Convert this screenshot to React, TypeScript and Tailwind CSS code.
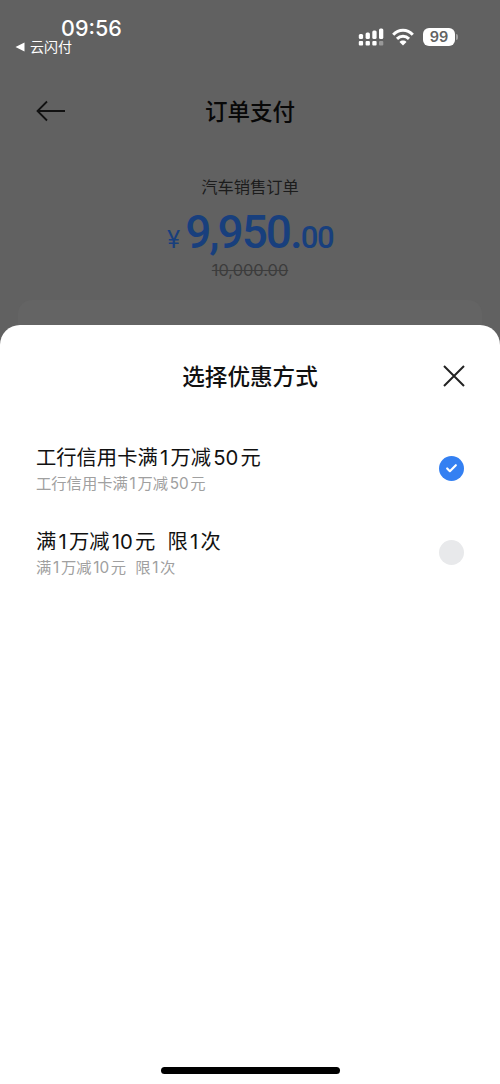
import { Check } from "lucide-react"

interface Coupon {
  id: number
  name: string
  selected: boolean
}

const coupons: Coupon[] = [
  { id: 1, name: "工行信用卡满1万减50元", selected: true },
  { id: 2, name: "满1万减10元 限1次", selected: false },
]

// Digits get a little air on both sides, between the Chinese characters
function MixedText({ text }: { text: string }) {
  return (
    <>
      {text.split(/(\d+| )/).map((part, i) => {
        if (part === " ") return <span key={i} className="inline-block w-[0.6em]" />
        if (/^\d+$/.test(part)) {
          return (
            <span key={i} className="mx-[0.11em]">
              {part}
            </span>
          )
        }
        return <span key={i}>{part}</span>
      })}
    </>
  )
}

function StatusBar() {
  return (
    <div className="flex h-[60px] justify-between text-white">
      <div className="pl-[15px] pt-[15px]">
        <div className="pl-[46px] text-[21.5px] font-medium leading-[26px]">09:56</div>
        <div className="flex h-[12px] items-center text-[14px] leading-[12px]">
          <svg width="10" height="10" viewBox="0 0 10 10" className="mr-[5px]">
            <path d="M0.5 5 L9.5 0.5 V9.5 Z" fill="currentColor" />
          </svg>
          云闪付
        </div>
      </div>
      <div className="mt-[28px] flex h-[18px] pr-[42px]">
        <svg width="26" height="18" viewBox="0 0 26 18" fill="currentColor">
          <rect x="0.8" y="6" width="4.3" height="5" rx="1.5" />
          <rect x="7.6" y="4.5" width="4.3" height="6.5" rx="1.5" />
          <rect x="14.3" y="2.5" width="4.3" height="8.5" rx="1.5" />
          <rect x="21" y="0.5" width="4.3" height="10.5" rx="1.5" />
          <rect x="0.8" y="13" width="4.3" height="4.5" rx="1" />
          <rect x="7.6" y="13" width="4.3" height="4.5" rx="1" />
          <rect x="14.3" y="13" width="4.3" height="4.5" rx="1" />
          <rect x="21" y="13" width="4.3" height="4.5" rx="1" opacity="0.35" />
        </svg>
        <svg width="22" height="18" viewBox="0 0 22 18" className="ml-[8px]" fill="none" stroke="currentColor" strokeWidth="3">
          <path d="M1.2 6.7 C6.8 0.8 15.2 0.8 20.8 6.7" />
          <path d="M5 10.9 C8.4 7.4 13.6 7.4 17 10.9" />
          <path d="M11 17.5 L7.5 13.9 C9.4 12.1 12.6 12.1 14.5 13.9 Z" fill="currentColor" stroke="none" />
        </svg>
        <div className="ml-[9px] flex h-[18px] w-[32px] items-center justify-center rounded-[6px] bg-white text-[14.5px] font-semibold text-[#626262]">
          99
        </div>
        <div className="ml-[1px] mt-[6px] h-[6px] w-[2px] rounded-r-full bg-[#a0a0a0]" />
      </div>
    </div>
  )
}

function OrderPage() {
  return (
    <div className="h-[325px] bg-[#616161]">
      <StatusBar />
      <header className="relative flex h-[102px] items-center justify-center">
        <svg width="30" height="24" viewBox="0 0 30 24" className="absolute left-[36px] top-[39px]" fill="none" stroke="#111" strokeWidth="1.8">
          <path d="M29 12 H1.5 M11 2.5 L1.5 12 L11 21.5" />
        </svg>
        <h1 className="pt-px text-[22.5px] font-medium text-[#080808]">订单支付</h1>
      </header>
      <div className="flex flex-col items-center">
        <div className="mt-[14px] text-[16.3px] leading-[22px] text-[#1c1c1c]">汽车销售订单</div>
        <div className="mt-[10px] flex h-[48px] items-baseline font-['Roboto'] leading-[48px] text-[#183f7d]">
          <span className="mr-[5px] font-['Inter'] text-[24px]">¥</span>
          <span className="text-[46px] font-medium tracking-[-2px]">9,950.</span>
          <span className="text-[31px] font-medium tracking-[-1.5px]">00</span>
        </div>
        <div className="mt-[4px] text-[16.4px] leading-[20px] text-[#3c3c3c] line-through">10,000.00</div>
      </div>
      <div className="mx-[18px] mt-[20px] h-[25px] rounded-t-[14px] bg-[#646464]" />
    </div>
  )
}

function CouponRow({ coupon }: { coupon: Coupon }) {
  return (
    <div className="flex h-[83.5px] items-center justify-between px-[36px]">
      <div className="pt-[3px]">
        <div className="text-[20.3px] leading-[28px] text-[#111]">
          <MixedText text={coupon.name} />
        </div>
        <div className="text-[15.3px] leading-[24px] text-[#a0a0a0]">
          <MixedText text={coupon.name} />
        </div>
      </div>
      {coupon.selected ? (
        <div className="flex size-[25px] items-center justify-center rounded-full bg-[#3480f2] text-white">
          <Check size={13} strokeWidth={4} />
        </div>
      ) : (
        <div className="size-[25px] rounded-full bg-[#e8e9eb]" />
      )}
    </div>
  )
}

export default function App() {
  return (
    <div className="h-[1084px] w-[500px] overflow-hidden bg-[#616161] font-['Inter','Noto_Sans_CJK_SC',sans-serif]">
      <OrderPage />
      <div className="flex h-[759px] flex-col rounded-t-[20px] bg-white">
        <div className="relative flex h-[102px] items-center justify-center">
          <h2 className="pt-[2px] text-[22.6px] font-medium text-[#111]">选择优惠方式</h2>
          <svg width="22" height="22" viewBox="0 0 22 22" className="absolute right-[35px] top-[40px]" fill="none" stroke="#222" strokeWidth="2">
            <path d="M1 1 L21 21 M21 1 L1 21" />
          </svg>
        </div>
        {coupons.map((coupon) => (
          <CouponRow key={coupon.id} coupon={coupon} />
        ))}
        <div className="mx-auto mb-[10px] mt-auto h-[7px] w-[179px] rounded-full bg-black" />
      </div>
    </div>
  )
}
